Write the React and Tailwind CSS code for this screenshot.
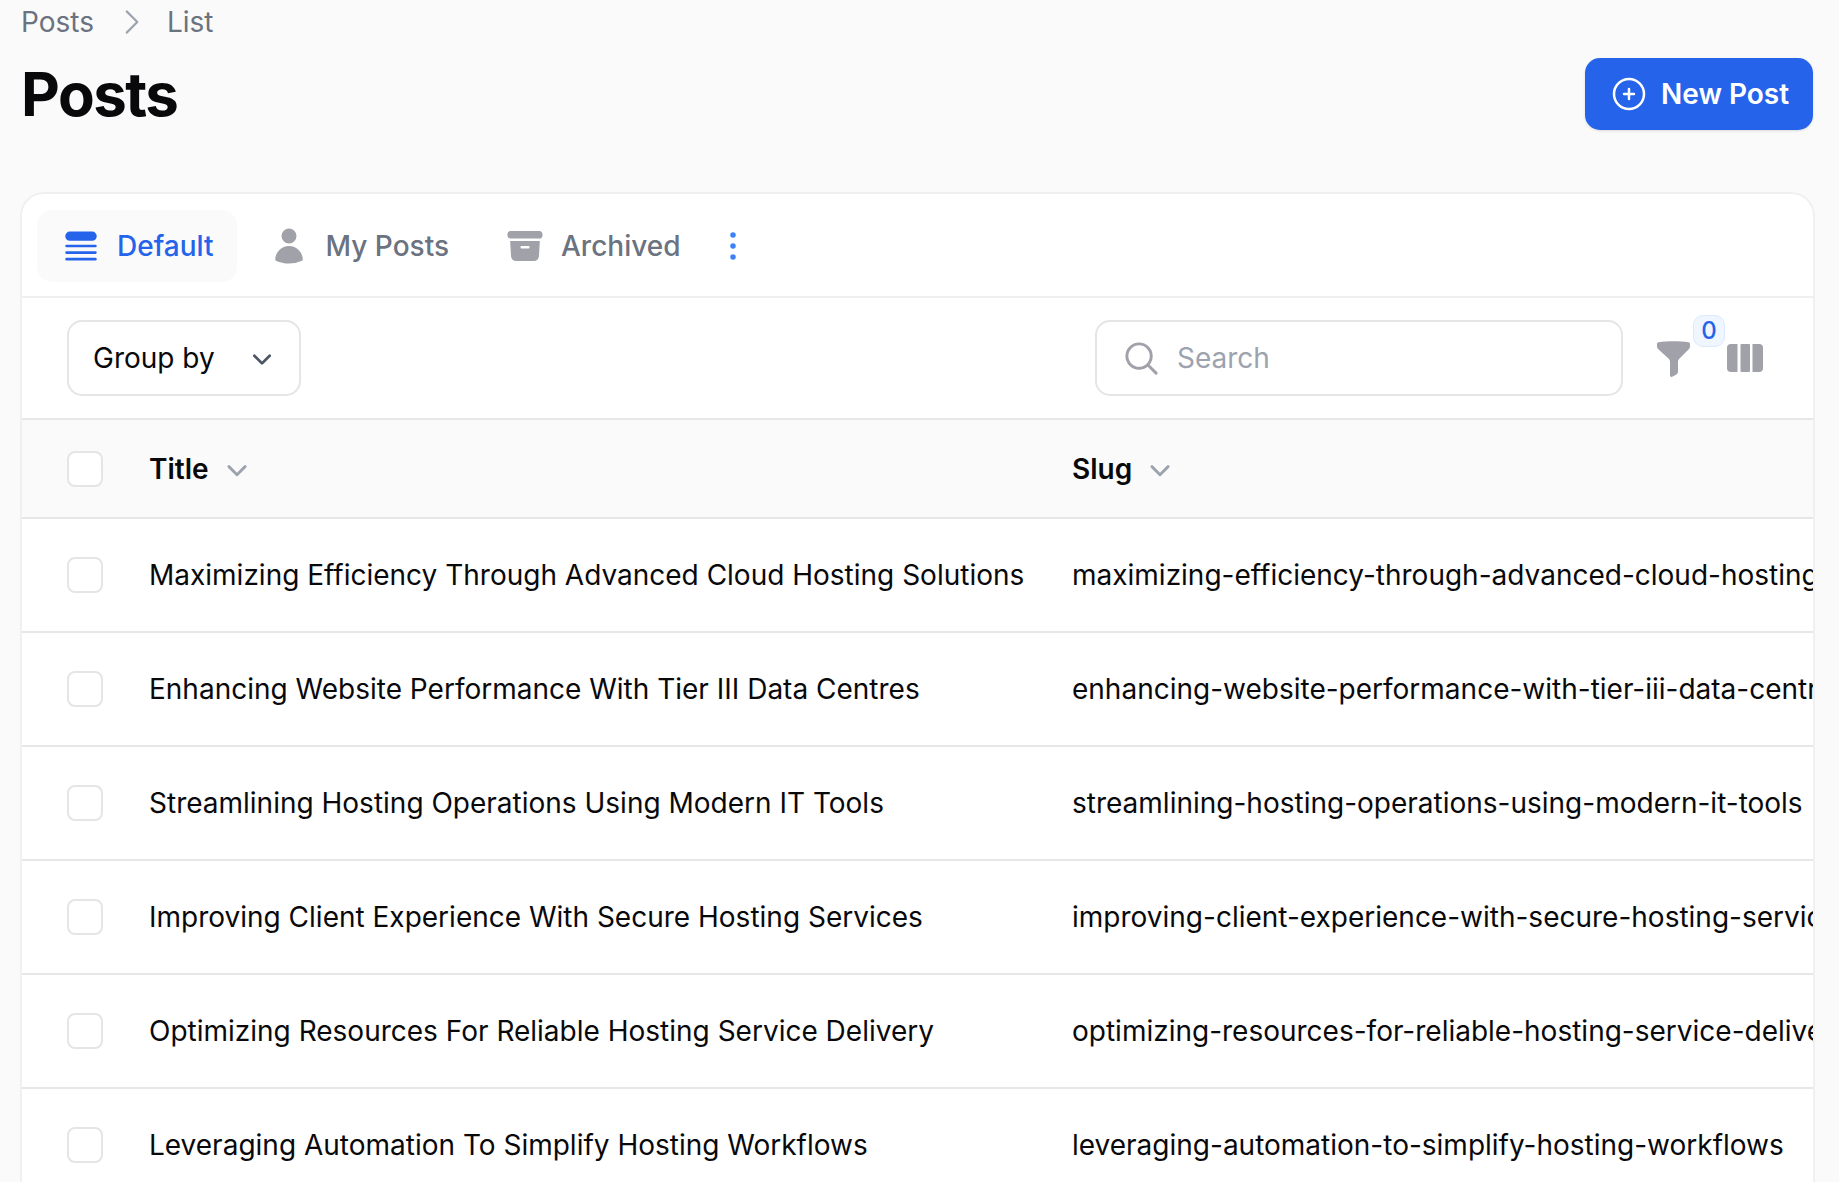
import React from "react";
import {
  HiQueueList,
  HiUser,
  HiArchiveBox,
  HiEllipsisVertical,
  HiOutlinePlusCircle,
  HiOutlineMagnifyingGlass,
  HiChevronRight,
  HiMiniChevronDown,
} from "react-icons/hi2";

const rows = [
  ["Maximizing Efficiency Through Advanced Cloud Hosting Solutions", "maximizing-efficiency-through-advanced-cloud-hosting-solutions"],
  ["Enhancing Website Performance With Tier III Data Centres", "enhancing-website-performance-with-tier-iii-data-centres"],
  ["Streamlining Hosting Operations Using Modern IT Tools", "streamlining-hosting-operations-using-modern-it-tools"],
  ["Improving Client Experience With Secure Hosting Services", "improving-client-experience-with-secure-hosting-services"],
  ["Optimizing Resources For Reliable Hosting Service Delivery", "optimizing-resources-for-reliable-hosting-service-delivery"],
  ["Leveraging Automation To Simplify Hosting Workflows", "leveraging-automation-to-simplify-hosting-workflows"],
];

function Check() {
  return <div className="w-[36px] h-[36px] rounded-[8px] border-2 border-[#e5e5e8] bg-white" />;
}

function Funnel() {
  return (
    <svg viewBox="0 0 33 36" className="w-[33px] h-[36px] block" fill="#a1a1aa">
      <path d="M1.5 1.2C10 -.2 23 -.2 31.5 1.2c1 .2 1.5.8 1.5 1.8v2.5c0 1-.4 1.8-1 2.4L22.5 17.5c-.9.9-1.5 2-1.5 3.3v10c0 1-.4 1.7-1.1 2.4L15.7 35.6c-.8.6-2.7.6-2.7-1V20.8c0-1.3-.6-2.4-1.5-3.3L1 8C.4 7.3 0 6.5 0 5.5V3C0 2 .5 1.4 1.5 1.2z" />
    </svg>
  );
}

function Columns() {
  return (
    <svg viewBox="0 0 36 28" className="w-[36px] h-[28px] block" fill="#a1a1aa">
      <path d="M4 0h6.5v28H4a4 4 0 0 1-4-4V4a4 4 0 0 1 4-4z" />
      <rect x="13.5" width="9.5" height="28" rx="1" />
      <path d="M25.5 0H32a4 4 0 0 1 4 4v20a4 4 0 0 1-4 4h-6.5z" />
    </svg>
  );
}

export default function App() {
  return (
    <div className="h-screen overflow-hidden bg-[#fafafa] pl-[20px] pr-[24px] pt-[4px] text-[28px] text-[#09090b] font-['Inter',sans-serif]">
      <div className="flex items-center h-[36px] text-[#6b7280] pl-px">
        <span>Posts</span>
        <HiChevronRight className="w-[34px] h-[34px] text-[#9ca3af] ml-[21px] mr-[18px]" />
        <span>List</span>
      </div>

      <div className="flex items-center justify-between mt-[18px] h-[72px]">
        <h1 className="text-[60px] leading-[72px] font-bold tracking-[-1.5px] pl-px">Posts</h1>
        <button className="flex items-center gap-[12px] h-[72px] w-[228px] mr-[2px] pl-[24px] rounded-[15px] bg-[#2563eb] text-white font-semibold shadow-sm">
          <HiOutlinePlusCircle className="w-[40px] h-[40px] shrink-0" />
          <span>New Post</span>
        </button>
      </div>

      <div className="mt-[62px] bg-white border-2 border-[#f0f0f1] rounded-[24px] overflow-hidden">
        <div className="flex items-center pl-[15px] pt-[16px] pb-[14px] border-b-2 border-[#f0f0f1] font-medium">
          <div className="flex items-center gap-[15px] h-[72px] pl-[23px] pr-[23px] bg-[#fafafa] rounded-[15px] text-[#2563eb]">
            <HiQueueList className="w-[42px] h-[42px]" />
            <span>Default</span>
          </div>
          <div className="flex items-center gap-[17px] ml-[32px] text-[#6b7280]">
            <HiUser className="w-[40px] h-[40px] text-[#a1a1aa]" />
            <span>My Posts</span>
          </div>
          <div className="flex items-center gap-[16px] ml-[56px] text-[#6b7280]">
            <HiArchiveBox className="w-[40px] h-[40px] text-[#a1a1aa]" />
            <span>Archived</span>
          </div>
          <HiEllipsisVertical className="w-[44px] h-[44px] ml-[30px] text-[#3b82f6]" />
        </div>

        <div className="flex items-center pl-[45px] pt-[22px] pb-[22px] border-b-2 border-[#e7e7e9]">
          <div className="flex items-center justify-between w-[234px] h-[76px] pl-[24px] pr-[19px] border-2 border-[#e5e5e8] rounded-[15px] bg-white">
            <span>Group by</span>
            <HiMiniChevronDown className="w-[36px] h-[36px] text-[#4b5563]" />
          </div>
          <div className="flex items-center gap-[16px] ml-[794px] w-[528px] h-[76px] pl-[25px] border-2 border-[#e5e5e8] rounded-[15px] bg-white text-[#9ca3af]">
            <HiOutlineMagnifyingGlass className="w-[39px] h-[39px] text-[#a1a1aa]" strokeWidth={1.8} />
            <span>Search</span>
          </div>
          <div className="relative ml-[34px] mt-[2px]">
            <Funnel />
            <span className="absolute left-[36px] top-[-26px] flex items-center justify-center w-[32px] h-[32px] rounded-[10px] bg-[#eff6ff] border border-[#dbeafe] text-[#2563eb] text-[24px] font-medium">
              0
            </span>
          </div>
          <div className="ml-[37px]">
            <Columns />
          </div>
        </div>

        <table className="table-fixed w-[1800px] text-left">
          <colgroup>
            <col className="w-[127px]" />
            <col className="w-[923px]" />
            <col />
          </colgroup>
          <thead>
            <tr className="bg-[#fafafa] border-b-2 border-[#e7e7e9]">
              <th className="h-[98px] pl-[45px] font-normal">
                <Check />
              </th>
              <th className="font-semibold">
                <span className="flex items-center gap-[9px]">
                  Title
                  <HiMiniChevronDown className="w-[38px] h-[38px] text-[#9ca3af]" />
                </span>
              </th>
              <th className="font-semibold">
                <span className="flex items-center gap-[9px]">
                  Slug
                  <HiMiniChevronDown className="w-[38px] h-[38px] text-[#9ca3af]" />
                </span>
              </th>
            </tr>
          </thead>
          <tbody>
            {rows.map(([title, slug]) => (
              <tr key={slug} className="border-b-2 border-[#e7e7e9]">
                <td className="h-[114px] pl-[45px]">
                  <Check />
                </td>
                <td className="whitespace-nowrap">{title}</td>
                <td className="whitespace-nowrap overflow-hidden">{slug}</td>
              </tr>
            ))}
          </tbody>
        </table>
      </div>
    </div>
  );
}
